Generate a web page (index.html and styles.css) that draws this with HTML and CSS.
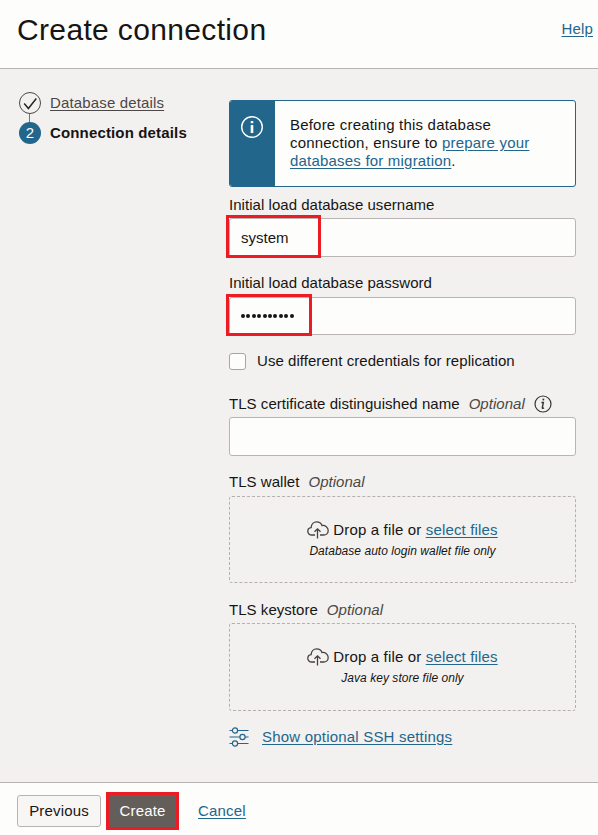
FILE: index.html
```html
<!DOCTYPE html>
<html lang="en">
<head>
<meta charset="utf-8">
<title>Create connection</title>
<link rel="stylesheet" href="styles.css">
</head>
<body>
<header class="header">
  <h1>Create connection</h1>
  <a class="link" href="#">Help</a>
</header>
<main class="main">
  <nav class="steps">
    <div class="step done">
      <svg width="24" height="24" viewBox="0 0 24 24" fill="none" stroke="#4a4744"><circle cx="12" cy="12" r="10.5" stroke-width="1"/><path d="M6.2 12.5l4.2 5L18.3 7.5" stroke="#262422" stroke-width="1.5"/></svg>
      <a href="#">Database details</a>
    </div>
    <div class="step current">
      <span class="number">2</span>
      <span class="current-label">Connection details</span>
    </div>
  </nav>
  <form class="form">
    <div class="notice">
      <div class="notice-icon">
        <svg width="24" height="24" viewBox="0 0 24 24" fill="none" stroke="#fff"><circle cx="12" cy="12" r="10.3" stroke-width="1.4"/><path d="M12 10v8M12 6v2.3" stroke-width="2.6"/></svg>
      </div>
      <p>Before creating this database connection, ensure to <a class="link" href="#">prepare your databases for migration</a>.</p>
    </div>
    <label class="label label-user">Initial load database username</label>
    <div class="field"><span class="value">system</span><i class="mark mark-user"></i></div>
    <label class="label label-pass">Initial load database password</label>
    <div class="field field-pass"><span class="value dots"><b></b><b></b><b></b><b></b><b></b><b></b><b></b><b></b><b></b><b></b></span><i class="mark mark-pass"></i></div>
    <div class="check-row"><span class="checkbox"></span><span>Use different credentials for replication</span></div>
    <div class="label label-cert">TLS certificate distinguished name <em>Optional</em>
      <svg class="info" width="18" height="18" viewBox="0 0 18 18" fill="none" stroke="#383532"><circle cx="9" cy="9" r="8" stroke-width="1.2"/><path d="M7.4 7.5h2L8.3 12.7q-.1.7.6.6l1.2-.5" stroke-width="1.4"/><path d="M9.2 5.4l.3-1.7" stroke-width="1.7"/></svg>
    </div>
    <div class="field"></div>
    <div class="label label-wallet">TLS wallet <em>Optional</em></div>
    <div class="drop">
      <div class="drop-line">
        <svg width="22" height="18" viewBox="0 0 22 18" fill="none" stroke="#454240" stroke-width="1.3"><path d="M8 14H4.8C2.4 14 .8 12.4.8 10.3c0-2 1.4-3.5 3.3-3.7C4.3 3.2 6.7.8 9.7.8c2.5 0 4.5 1.5 5.3 3.7 3.4-.4 6.2 1.8 6.2 4.9 0 2.7-2 4.6-4.6 4.6H13M10.5 17.5V7.8M7.5 10.8l3-3 3 3"/></svg>
        <span>Drop a file or <a class="link" href="#">select files</a></span>
      </div>
      <div class="hint">Database auto login wallet file only</div>
    </div>
    <div class="label label-key">TLS keystore <em>Optional</em></div>
    <div class="drop drop-key">
      <div class="drop-line">
        <svg width="22" height="18" viewBox="0 0 22 18" fill="none" stroke="#454240" stroke-width="1.3"><path d="M8 14H4.8C2.4 14 .8 12.4.8 10.3c0-2 1.4-3.5 3.3-3.7C4.3 3.2 6.7.8 9.7.8c2.5 0 4.5 1.5 5.3 3.7 3.4-.4 6.2 1.8 6.2 4.9 0 2.7-2 4.6-4.6 4.6H13M10.5 17.5V7.8M7.5 10.8l3-3 3 3"/></svg>
        <span>Drop a file or <a class="link" href="#">select files</a></span>
      </div>
      <div class="hint">Java key store file only</div>
    </div>
    <div class="ssh">
      <svg width="20" height="20" viewBox="0 0 20 20" fill="none" stroke="#22668c" stroke-width="1.2"><path d="M.5 3.5h2.9M8.6 3.5H19.5M.5 10h10.4M16.1 10h3.4M.5 16.5h2.9M8.6 16.5H19.5"/><circle cx="6" cy="3.5" r="2.6"/><circle cx="13.5" cy="10" r="2.6"/><circle cx="6" cy="16.5" r="2.6"/></svg>
      <a class="link" href="#">Show optional SSH settings</a>
    </div>
  </form>
</main>
<footer class="footer">
  <button class="btn">Previous</button>
  <button class="btn primary">Create</button>
  <a class="link" href="#">Cancel</a>
</footer>
</body>
</html>
```

FILE: styles.css
```css
* { box-sizing: border-box; }
body {
  margin: 0;
  width: 598px;
  height: 835px;
  overflow: hidden;
  display: flex;
  flex-direction: column;
  background: #f3f1f0;
  color: #161513;
  font: 15px/18px "Liberation Sans", Arial, sans-serif;
}
.link { color: #22668c; text-decoration: underline; text-underline-offset: 2px; }
.header {
  height: 69px;
  flex: none;
  display: flex;
  justify-content: space-between;
  padding: 12px 5px 0 17px;
  background: #fdfdfc;
  border-bottom: 1px solid #b9b3b0;
}
.header h1 { margin: 0; font-size: 30px; line-height: 36px; font-weight: 400; letter-spacing: .35px; }
.header .link { margin-top: 8px; letter-spacing: .15px; }
.main { flex: 1; display: flex; min-height: 0; }
.steps { width: 229px; flex: none; padding: 22px 0 0 18px; }
.step { display: flex; align-items: center; gap: 8px; height: 24px; }
.done { margin-bottom: 6px; position: relative; }
.done::after { content: ""; position: absolute; left: 11px; top: 23px; width: 1px; height: 8px; background: #777370; }
.done a { color: #4b4845; text-underline-offset: 2px; letter-spacing: .15px; }
.number {
  width: 22px;
  height: 22px;
  margin: 0 1px;
  border-radius: 50%;
  background: #22668c;
  color: #fff;
  line-height: 22px;
  text-align: center;
}
.current-label { font-weight: 700; letter-spacing: .15px; }
.form { width: 347px; padding-top: 31px; }
.notice { height: 87px; display: flex; border: 1px solid #22668c; border-radius: 3px; background: #fdfdfc; overflow: hidden; }
.notice-icon { width: 45px; flex: none; padding: 14px 0 0 10px; background: #22668c; }
.notice p { margin: 0; padding: 15px 30px 0 15px; letter-spacing: .2px; }
.label { display: flex; align-items: center; height: 18px; letter-spacing: .04px; }
.label em { margin-left: 9px; color: #4b4845; }
.label-user { margin: 9px 0 4px; }
.label-pass { margin: 17px 0 5px; }
.label-cert { margin: 25px 0 4px; }
.label-wallet { margin: 17px 0 5px; }
.label-key { margin: 18px 0 4px; }
.info { margin-left: 9px; }
.field {
  position: relative;
  height: 39px;
  display: flex;
  align-items: center;
  padding-left: 11px;
  border: 1px solid #bab5b2;
  border-radius: 3px;
  background: #fdfdfc;
}
.field-pass { height: 38px; }
.mark { position: absolute; left: -4px; top: -4px; border: 3px solid #ed1c24; }
.mark-user { width: 95px; height: 43px; }
.mark-pass { width: 86px; height: 42px; }
.dots { display: flex; gap: 1.4px; }
.dots b { width: 4px; height: 4px; border-radius: 50%; background: #161513; }
.check-row { display: flex; align-items: center; gap: 11px; height: 18px; margin-top: 17px; letter-spacing: .05px; }
.checkbox { width: 17px; height: 17px; border: 1px solid #aaa5a1; border-radius: 3px; background: #fdfdfc; }
.drop { height: 87px; border: 1px dashed #b5b0ac; border-radius: 3px; padding-top: 24px; }
.drop-key { height: 88px; }
.drop-line { display: flex; justify-content: center; align-items: center; gap: 4px; letter-spacing: .16px; }
.hint { margin-top: 4px; font-size: 12px; line-height: 16px; font-style: italic; text-align: center; letter-spacing: .04px; }
.ssh { display: flex; align-items: center; gap: 13px; margin-top: 16px; height: 20px; letter-spacing: .2px; }
.footer {
  height: 53px;
  flex: none;
  display: flex;
  align-items: flex-start;
  padding: 12px 0 0 17px;
  border-top: 1px solid #b9b3b0;
  background: #fdfdfc;
}
.btn {
  height: 32px;
  width: 84px;
  padding: 0;
  border: 1px solid #b9b3b0;
  border-radius: 3px;
  background: #f7f6f5;
  color: #161513;
  font: inherit;
  letter-spacing: .15px;
}
.btn.primary {
  width: 73px;
  height: 38px;
  margin: -3px 19px 0 5px;
  border: 3px solid #ed1c24;
  border-radius: 0;
  background: #645e5a;
  color: #fff;
}
.footer .link { margin-top: 7px; letter-spacing: .2px; }
```
